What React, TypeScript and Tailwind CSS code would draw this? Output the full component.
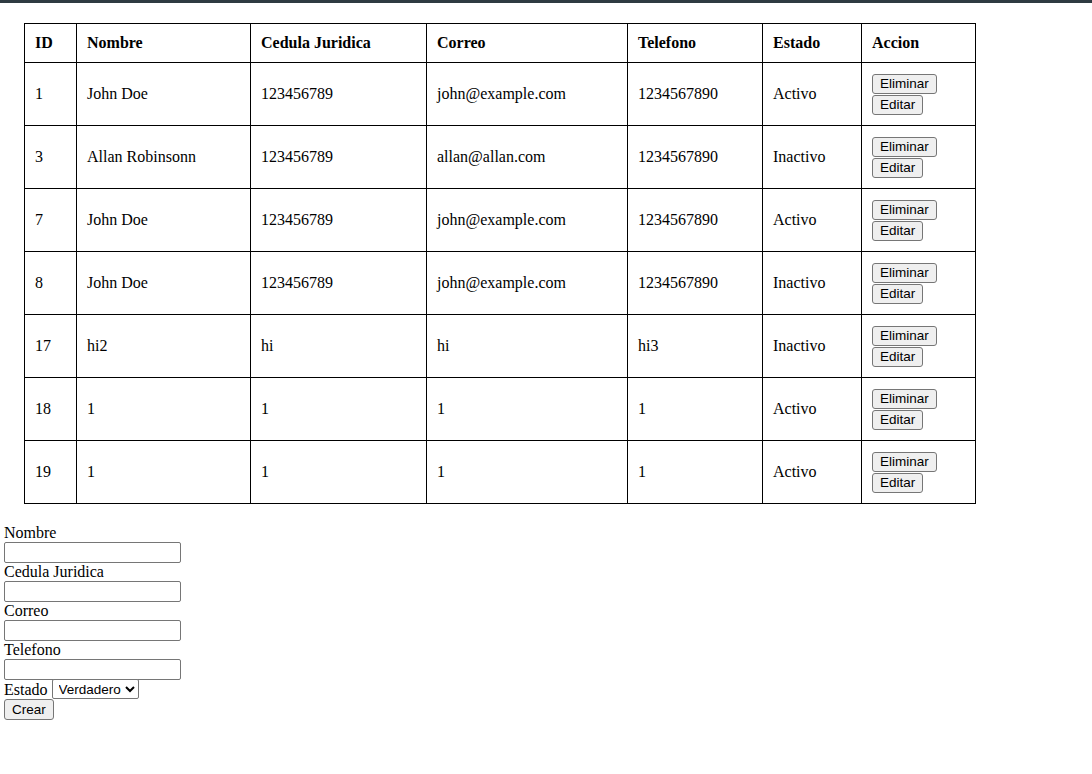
const ROWS = [
  { id: 1, nombre: "John Doe", cedula: "123456789", correo: "john@example.com", telefono: "1234567890", estado: "Activo" },
  { id: 3, nombre: "Allan Robinsonn", cedula: "123456789", correo: "allan@allan.com", telefono: "1234567890", estado: "Inactivo" },
  { id: 7, nombre: "John Doe", cedula: "123456789", correo: "john@example.com", telefono: "1234567890", estado: "Activo" },
  { id: 8, nombre: "John Doe", cedula: "123456789", correo: "john@example.com", telefono: "1234567890", estado: "Inactivo" },
  { id: 17, nombre: "hi2", cedula: "hi", correo: "hi", telefono: "hi3", estado: "Inactivo" },
  { id: 18, nombre: "1", cedula: "1", correo: "1", telefono: "1", estado: "Activo" },
  { id: 19, nombre: "1", cedula: "1", correo: "1", telefono: "1", estado: "Activo" },
];

const COLS = [
  { label: "ID", w: "w-[52px]" },
  { label: "Nombre", w: "w-[174px]" },
  { label: "Cedula Juridica", w: "w-[176px]" },
  { label: "Correo", w: "w-[201px]" },
  { label: "Telefono", w: "w-[135px]" },
  { label: "Estado", w: "w-[99px]" },
  { label: "Accion", w: "w-[114px]" },
];

const btn =
  "border border-[#767676] rounded-[3px] bg-[#efefef] px-[7px] h-[20px] leading-[16px] text-[13.5px] text-black [font-family:'Liberation_Sans',Arial,sans-serif]";

const input =
  "block w-[177px] h-[21px] border border-[#767676] rounded-[2px] bg-white px-[2px] text-[13.33px] [font-family:'Liberation_Sans',Arial,sans-serif]";

const FIELDS = ["Nombre", "Cedula Juridica", "Correo", "Telefono"];

export default function App() {
  return (
    <div className="min-h-[774px] bg-white text-black text-[16px] [font-family:'Liberation_Serif','Times_New_Roman',serif]">
      <div className="h-[3px] bg-[#2f3b41]" />
      <div className="px-[4px]">
        <table className="table-fixed border-collapse w-[951px] mt-[20px] ml-[20px]">
          <colgroup>
            {COLS.map((c) => (
              <col key={c.label} className={c.w} />
            ))}
          </colgroup>
          <thead>
            <tr className="h-[39px]">
              {COLS.map((c) => (
                <th key={c.label} className="border border-black px-[10px] text-left font-bold align-middle">
                  {c.label}
                </th>
              ))}
            </tr>
          </thead>
          <tbody>
            {ROWS.map((r) => (
              <tr key={r.id} className="h-[63px]">
                <td className="border border-black px-[10px] align-middle">{r.id}</td>
                <td className="border border-black px-[10px] align-middle">{r.nombre}</td>
                <td className="border border-black px-[10px] align-middle">{r.cedula}</td>
                <td className="border border-black px-[10px] align-middle">{r.correo}</td>
                <td className="border border-black px-[10px] align-middle">{r.telefono}</td>
                <td className="border border-black px-[10px] align-middle">{r.estado}</td>
                <td className="border border-black px-[10px] align-middle">
                  <div className="flex flex-col items-start gap-[1px]">
                    <button className={btn}>Eliminar</button>
                    <button className={btn}>Editar</button>
                  </div>
                </td>
              </tr>
            ))}
          </tbody>
        </table>

        <form className="mt-[20px] flex flex-col items-start">
          {FIELDS.map((f) => (
            <div key={f}>
              <label className="block leading-[18px]">{f}</label>
              <input className={input} type="text" />
            </div>
          ))}
          <div className="flex items-end gap-[4px] h-[19px]">
            <label className="leading-[18px]">Estado</label>
            <select className="h-[20px] border border-[#767676] rounded-[2px] bg-white pl-[2px] text-[13.5px] [font-family:'Liberation_Sans',Arial,sans-serif]">
              <option>Verdadero</option>
              <option>Falso</option>
            </select>
          </div>
          <button type="button" className={btn + " h-[21px]"}>
            Crear
          </button>
        </form>
      </div>
    </div>
  );
}
